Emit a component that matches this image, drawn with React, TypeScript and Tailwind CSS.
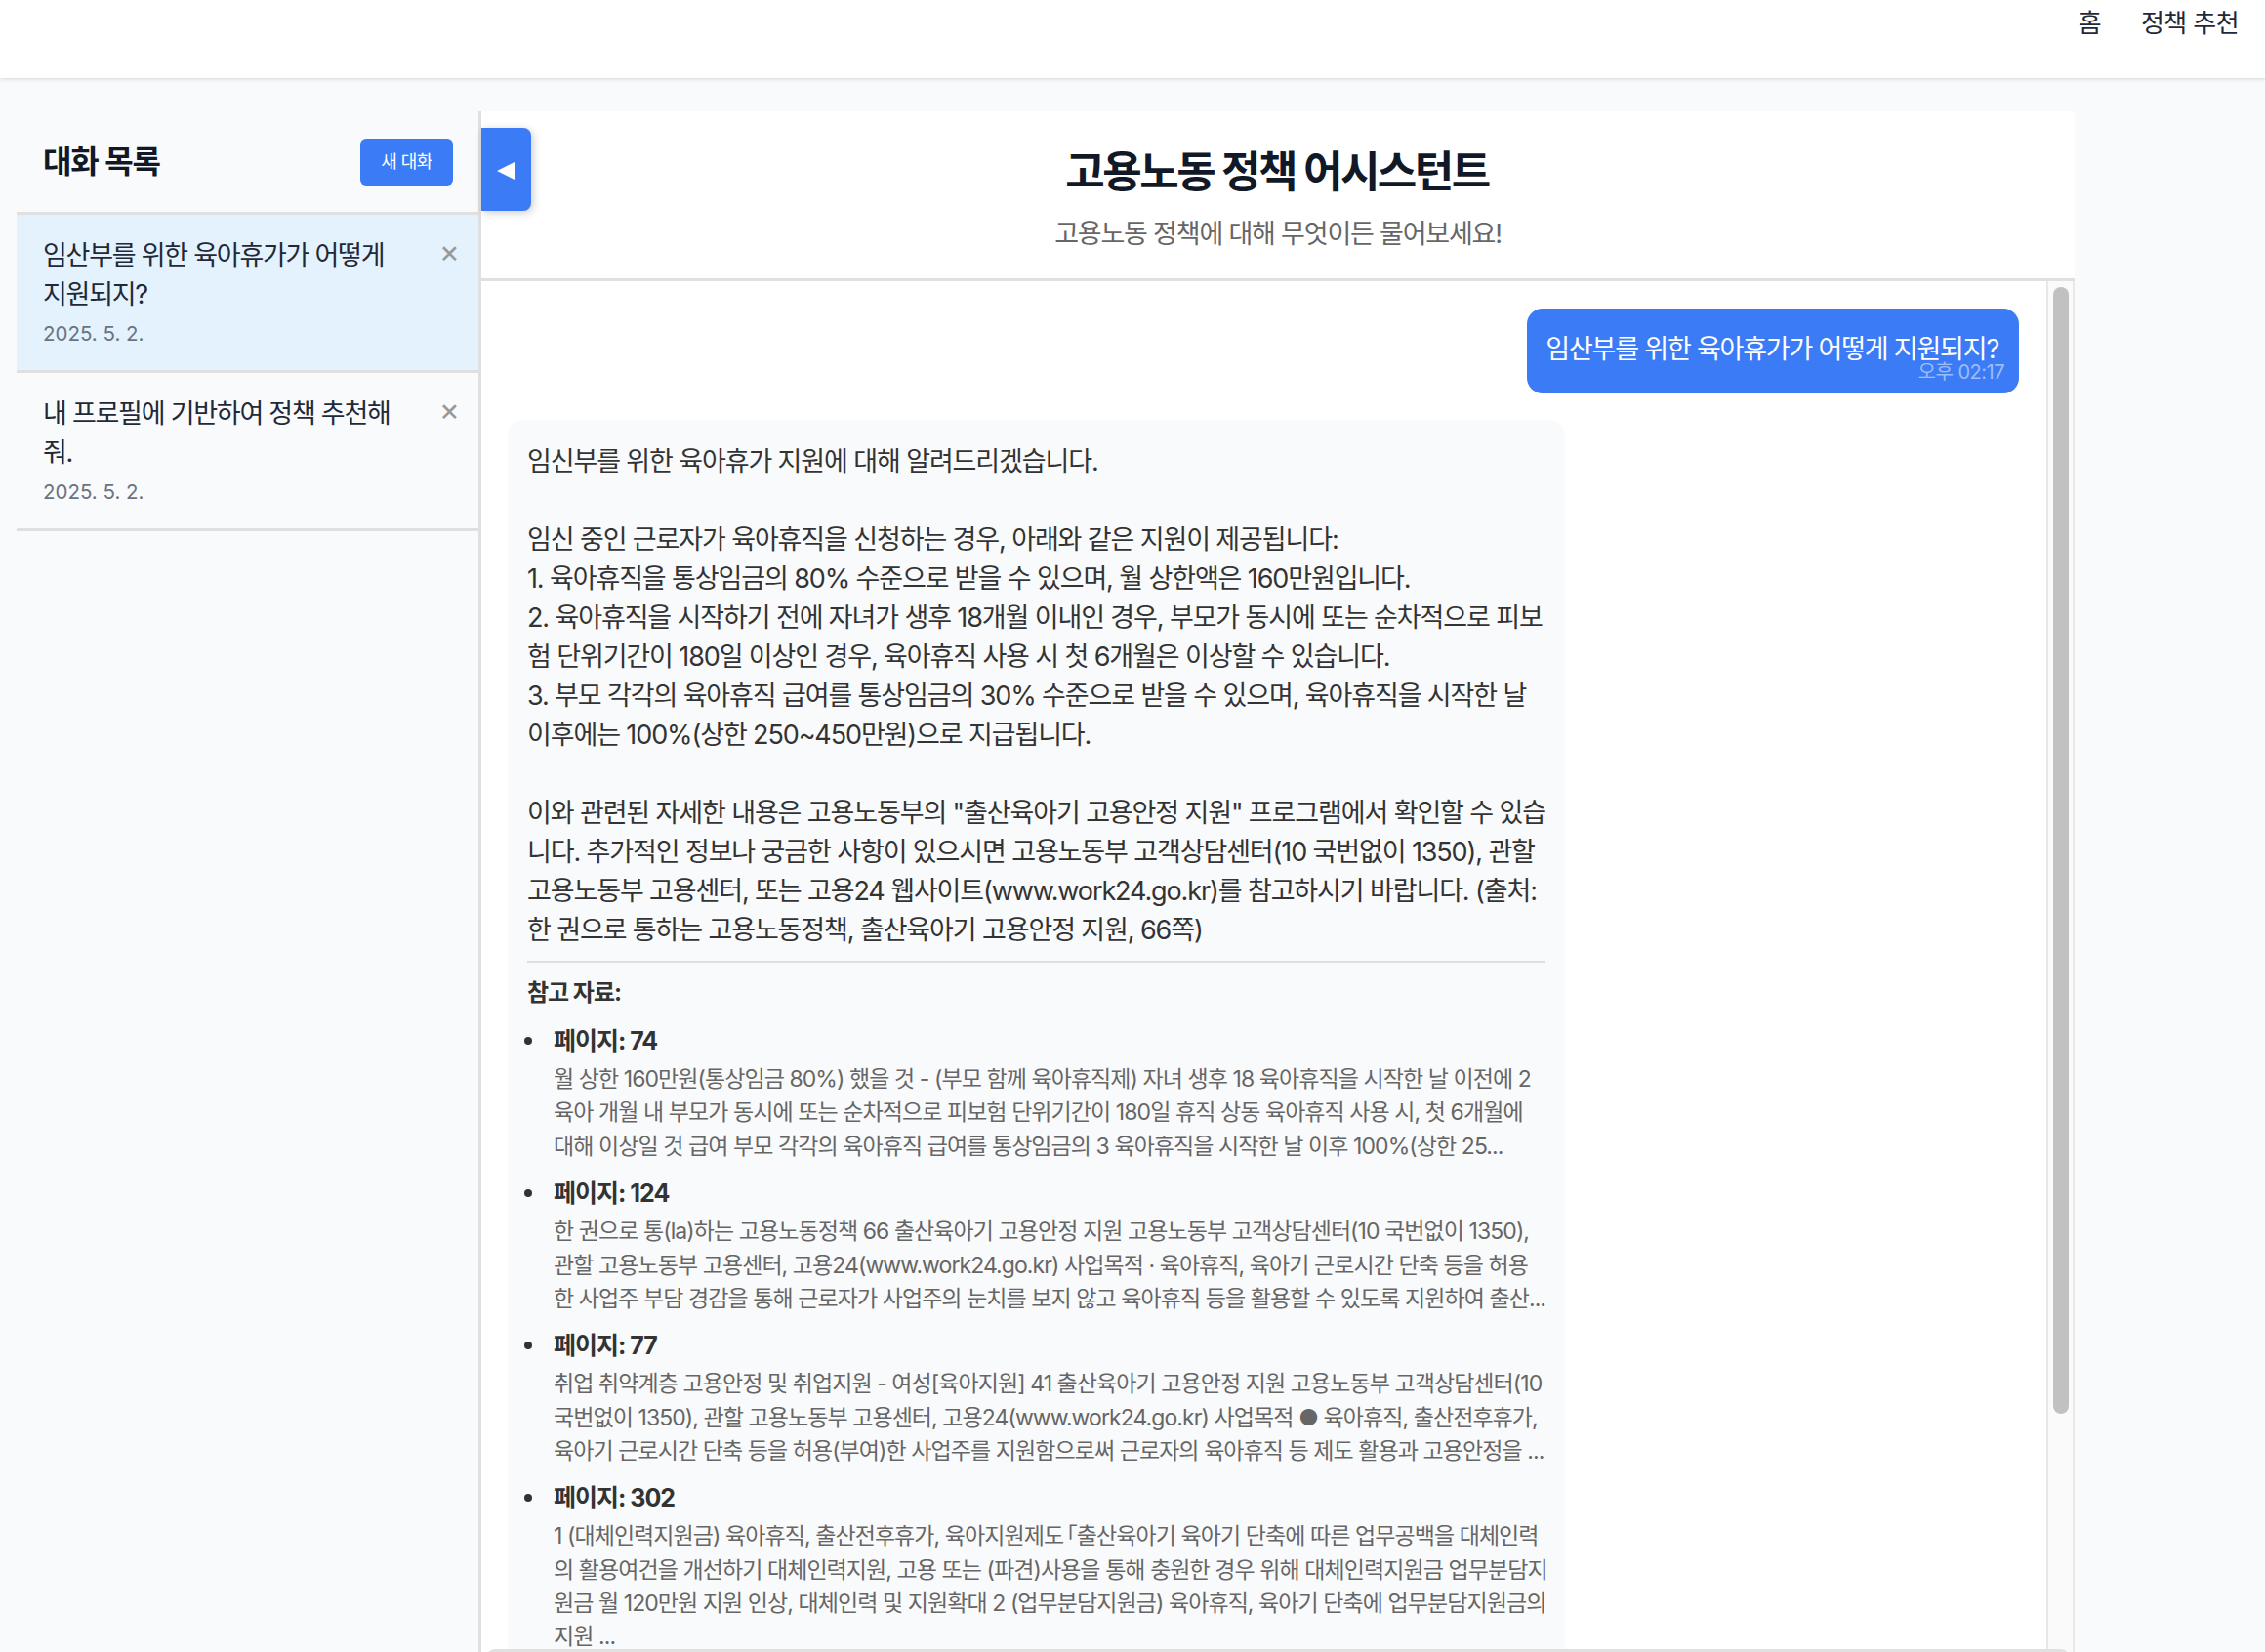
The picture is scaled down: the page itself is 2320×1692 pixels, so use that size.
import React from 'react';

const font = { fontFamily: 'Inter, "Noto Sans CJK KR", sans-serif' };

const conversations = [
  { lines: ['임산부를 위한 육아휴가가 어떻게', '지원되지?'], date: '2025. 5. 2.', active: true },
  { lines: ['내 프로필에 기반하여 정책 추천해', '줘.'], date: '2025. 5. 2.', active: false },
];

const answer = [
  '임신부를 위한 육아휴가 지원에 대해 알려드리겠습니다.',
  '',
  '임신 중인 근로자가 육아휴직을 신청하는 경우, 아래와 같은 지원이 제공됩니다:',
  '1. 육아휴직을 통상임금의 80% 수준으로 받을 수 있으며, 월 상한액은 160만원입니다.',
  '2. 육아휴직을 시작하기 전에 자녀가 생후 18개월 이내인 경우, 부모가 동시에 또는 순차적으로 피보',
  '험 단위기간이 180일 이상인 경우, 육아휴직 사용 시 첫 6개월은 이상할 수 있습니다.',
  '3. 부모 각각의 육아휴직 급여를 통상임금의 30% 수준으로 받을 수 있으며, 육아휴직을 시작한 날',
  '이후에는 100%(상한 250~450만원)으로 지급됩니다.',
  '',
  '이와 관련된 자세한 내용은 고용노동부의 "출산육아기 고용안정 지원" 프로그램에서 확인할 수 있습',
  '니다. 추가적인 정보나 궁금한 사항이 있으시면 고용노동부 고객상담센터(10 국번없이 1350), 관할',
  '고용노동부 고용센터, 또는 고용24 웹사이트(www.work24.go.kr)를 참고하시기 바랍니다. (출처:',
  '한 권으로 통하는 고용노동정책, 출산육아기 고용안정 지원, 66쪽)',
];

const sources: { page: string; lines: React.ReactNode[] }[] = [
  {
    page: '페이지: 74',
    lines: [
      '월 상한 160만원(통상임금 80%) 했을 것 - (부모 함께 육아휴직제) 자녀 생후 18 육아휴직을 시작한 날 이전에 2',
      '육아 개월 내 부모가 동시에 또는 순차적으로 피보험 단위기간이 180일 휴직 상동 육아휴직 사용 시, 첫 6개월에',
      '대해 이상일 것 급여 부모 각각의 육아휴직 급여를 통상임금의 3 육아휴직을 시작한 날 이후 100%(상한 25...',
    ],
  },
  {
    page: '페이지: 124',
    lines: [
      '한 권으로 통(la)하는 고용노동정책 66 출산육아기 고용안정 지원 고용노동부 고객상담센터(10 국번없이 1350),',
      '관할 고용노동부 고용센터, 고용24(www.work24.go.kr) 사업목적 · 육아휴직, 육아기 근로시간 단축 등을 허용',
      '한 사업주 부담 경감을 통해 근로자가 사업주의 눈치를 보지 않고 육아휴직 등을 활용할 수 있도록 지원하여 출산...',
    ],
  },
  {
    page: '페이지: 77',
    lines: [
      '취업 취약계층 고용안정 및 취업지원 - 여성[육아지원] 41 출산육아기 고용안정 지원 고용노동부 고객상담센터(10',
      '국번없이 1350), 관할 고용노동부 고용센터, 고용24(www.work24.go.kr) 사업목적 ● 육아휴직, 출산전후휴가,',
      '육아기 근로시간 단축 등을 허용(부여)한 사업주를 지원함으로써 근로자의 육아휴직 등 제도 활용과 고용안정을 ...',
    ],
  },
  {
    page: '페이지: 302',
    lines: [
      <>1 (대체인력지원금) 육아휴직, 출산전후휴가, 육아지원제도 <span className="-ml-[14px] inline-block">「</span>출산육아기 육아기 단축에 따른 업무공백을 대체인력</>,
      '의 활용여건을 개선하기 대체인력지원, 고용 또는 (파견)사용을 통해 충원한 경우 위해 대체인력지원금 업무분담지',
      '원금 월 120만원 지원 인상, 대체인력 및 지원확대 2 (업무분담지원금) 육아휴직, 육아기 단축에 업무분담지원금의',
      '지원 ...',
    ],
  },
];

function ConversationItem({ lines, date, active }: { lines: string[]; date: string; active: boolean }) {
  return (
    <div className={`flex h-[162px] justify-between border-b-[3px] border-[#e0e0e0] pl-[27px] pr-[19px] pt-[22px] ${active ? 'bg-[#e3f2fd]' : ''}`}>
      <div>
        {lines.map((l) => (
          <div key={l} className="whitespace-nowrap text-[27px] leading-[40px] tracking-[-1.25px] text-[#1f2937]">{l}</div>
        ))}
        <div className="mt-[5px] text-[20.5px] leading-[30px] text-[#6b7280]">{date}</div>
      </div>
      <span className="-mt-[3px] text-[32px] leading-[38px] text-[#999999]">×</span>
    </div>
  );
}

export default function App() {
  return (
    <div className="flex h-screen flex-col overflow-hidden bg-[#f9fafb]" style={font}>
      <header className="relative z-10 flex h-[80px] shrink-0 justify-end gap-[41px] bg-white pr-[27px] pt-[5px] shadow-[0_1px_4px_rgba(0,0,0,0.15)]">
        <a className="text-[26px] leading-[38px] tracking-[-0.6px] text-[#1f2937]">홈</a>
        <a className="text-[26px] leading-[38px] tracking-[-0.6px] text-[#1f2937]">정책 추천</a>
      </header>

      <main className="flex min-h-0 flex-1 pl-[17px] pt-[34px]">
        <aside className="w-[476px] shrink-0 border-r-[3px] border-[#e0e0e0] bg-[#f9fafb]">
          <div className="flex h-[106px] items-center justify-between border-b-[3px] border-[#e0e0e0] pl-[27px] pr-[26px]">
            <h2 className="pt-[1px] text-[32px] font-bold tracking-[-1.1px] text-[#111827]">대화 목록</h2>
            <button className="h-[48px] w-[95px] rounded-[6px] bg-[#3b7bf6] text-[18px] tracking-[-0.5px] text-white">새 대화</button>
          </div>
          {conversations.map((c) => (
            <ConversationItem key={c.lines[0]} {...c} />
          ))}
        </aside>

        <section className="relative flex w-[1632px] shrink-0 flex-col bg-white">
          <button className="absolute left-0 top-[17px] z-10 flex h-[85px] w-[51px] items-center justify-center rounded-r-[8px] bg-[#3b7bf6] shadow-[2px_2px_8px_rgba(0,0,0,0.2)]">
            <svg width="18" height="18" viewBox="0 0 18 18" className="mr-[2px] mt-[3px]">
              <polygon points="0,9 18,0 18,18" fill="#ffffff" />
            </svg>
          </button>

          <div className="h-[174px] shrink-0 border-b-[3px] border-[#e0e0e0] pt-[29px] text-center">
            <h1 className="pr-[2px] text-[44px] font-bold leading-[66px] tracking-[-2.5px] text-[#111827]">고용노동 정책 어시스턴트</h1>
            <p className="mt-[11px] text-[27px] leading-[40px] tracking-[-1.2px] text-[#666666]">고용노동 정책에 대해 무엇이든 물어보세요!</p>
          </div>

          <div className="relative flex min-h-0 flex-1">
            <div className="min-w-0 flex-1 overflow-hidden pl-[27px] pr-[28px] pt-[28px]">
              <div className="flex justify-end">
                <div className="h-[87px] rounded-[16px] bg-[#3b7bf6] pl-[19px] pr-[21px] pt-[22px]">
                  <div className="whitespace-nowrap text-[27px] leading-[40px] tracking-[-1.2px] text-white">임산부를 위한 육아휴가가 어떻게 지원되지?</div>
                  <div className="-mr-[6px] -mt-[11px] text-right text-[20px] leading-[28px] tracking-[-0.5px] text-white/50">오후 02:17</div>
                </div>
              </div>

              <div className="mt-[27px] w-[1083px] rounded-[16px] bg-[#f9fafb] px-[20px] pb-[40px] pt-[23px] text-[#333333]">
                {answer.map((line, i) => (
                  <div key={i} className="h-[40px] whitespace-nowrap text-[27px] leading-[40px] tracking-[-1.12px]">{line}</div>
                ))}
                <div className="mt-[11px] border-t-[2px] border-[#dddfe2] pt-[13px]">
                  <div className="text-[24px] font-bold leading-[36px] tracking-[-1px]">참고 자료:</div>
                  <ul className="mt-[13px] pl-[27px]">
                    {sources.map((s) => (
                      <li key={s.page} className="relative mb-[13px]">
                        <span className="absolute -left-[30px] top-[14px] h-[8px] w-[8px] rounded-full bg-[#333333]" />
                        <div className="text-[25px] font-bold leading-[36px] tracking-[-1px]">{s.page}</div>
                        <div className="mt-[4.2px] text-[#666666]">
                          {s.lines.map((l, i) => (
                            <div key={i} className="whitespace-nowrap text-[23px] leading-[34.3px] tracking-[-0.93px]">{l}</div>
                          ))}
                        </div>
                      </li>
                    ))}
                  </ul>
                </div>
              </div>
            </div>

            <div className="w-[29px] shrink-0 border-x-[2px] border-[#e8e8e8] bg-[#fafafa] pl-[5px] pt-[6px]">
              <div className="h-[1154px] w-[16px] rounded-full bg-[#c1c1c1]" />
            </div>

            <div className="absolute bottom-[-6px] left-[5px] h-[9px] w-[1622px] rounded-t-[12px] border-t-[3px] border-[#e0e0e0] bg-white" />
          </div>
        </section>
      </main>
    </div>
  );
}
